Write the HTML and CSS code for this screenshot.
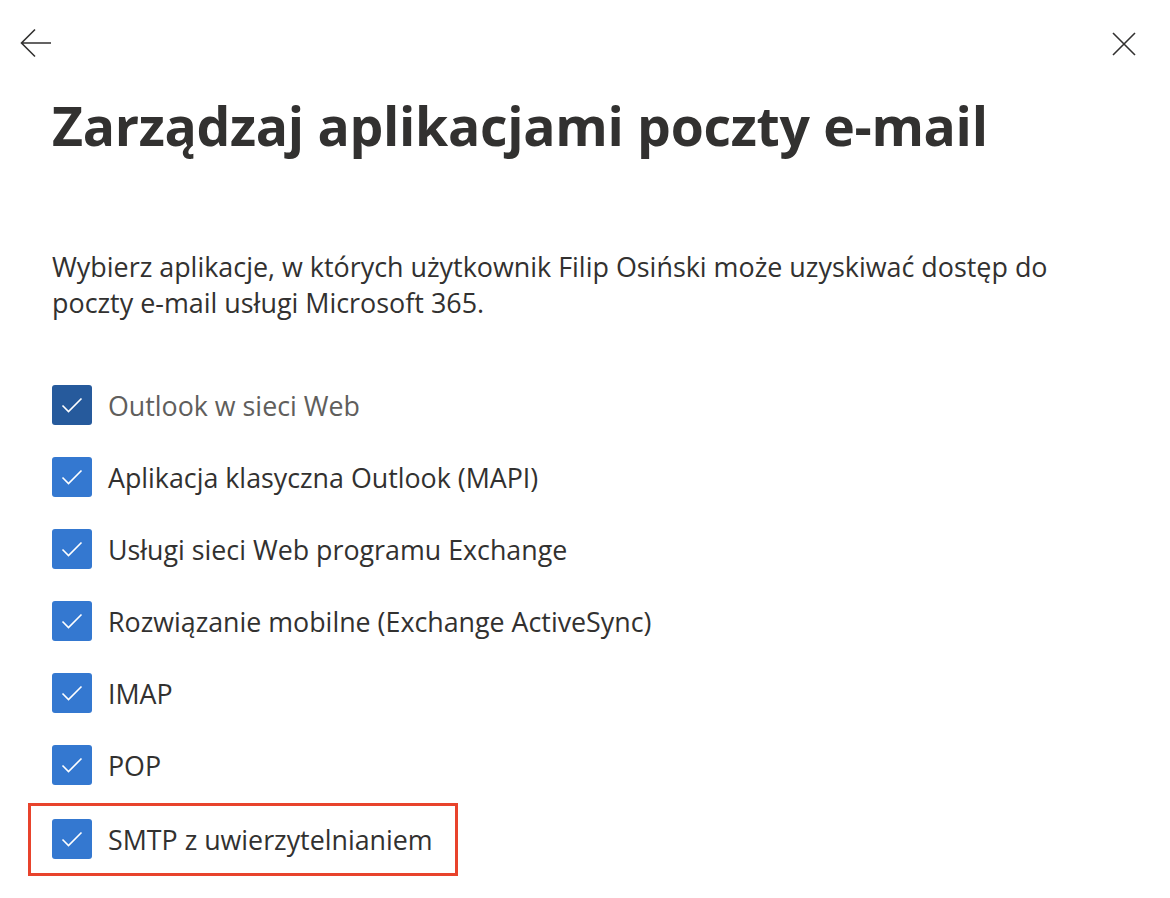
FILE: index.html
```html
<!DOCTYPE html>
<html lang="pl">
<head>
  <meta charset="UTF-8">
  <meta name="viewport" content="width=device-width, initial-scale=1.0">
  <title>Zarządzaj aplikacjami poczty e-mail</title>
  <link rel="stylesheet" href="styles.css">
</head>
<body>

<!-- Top bar -->
<div class="top-bar">
  <button class="icon-button back-button" aria-label="Wstecz">
    <svg width="32" height="30" viewBox="0 0 32 30">
      <path d="M31 15H2M15 1.5L1.5 15L15 28.5" fill="none" stroke="#323130" stroke-width="1.6"/>
    </svg>
  </button>
  <button class="icon-button close-button" aria-label="Zamknij">
    <svg width="24" height="24" viewBox="0 0 24 24">
      <path d="M1 1L23 23M23 1L1 23" fill="none" stroke="#323130" stroke-width="1.6"/>
    </svg>
  </button>
</div>

<!-- Panel -->
<div class="panel">
  <h1 class="panel-title">Zarządzaj aplikacjami poczty e-mail</h1>
  <p class="panel-description">Wybierz aplikacje, w których użytkownik Filip Osiński może uzyskiwać dostęp do poczty e-mail usługi Microsoft 365.</p>

  <div class="app-list">
    <label class="app-item disabled">
      <span class="checkbox"><svg width="22" height="16" viewBox="0 0 22 16"><path d="M1.5 8.5L7.5 14.5L20.5 1.5" fill="none" stroke="#fff" stroke-width="1.6"/></svg></span>
      <span class="app-name">Outlook w sieci Web</span>
    </label>
    <label class="app-item">
      <span class="checkbox"><svg width="22" height="16" viewBox="0 0 22 16"><path d="M1.5 8.5L7.5 14.5L20.5 1.5" fill="none" stroke="#fff" stroke-width="1.6"/></svg></span>
      <span class="app-name">Aplikacja klasyczna Outlook (MAPI)</span>
    </label>
    <label class="app-item">
      <span class="checkbox"><svg width="22" height="16" viewBox="0 0 22 16"><path d="M1.5 8.5L7.5 14.5L20.5 1.5" fill="none" stroke="#fff" stroke-width="1.6"/></svg></span>
      <span class="app-name">Usługi sieci Web programu Exchange</span>
    </label>
    <label class="app-item">
      <span class="checkbox"><svg width="22" height="16" viewBox="0 0 22 16"><path d="M1.5 8.5L7.5 14.5L20.5 1.5" fill="none" stroke="#fff" stroke-width="1.6"/></svg></span>
      <span class="app-name">Rozwiązanie mobilne (Exchange ActiveSync)</span>
    </label>
    <label class="app-item">
      <span class="checkbox"><svg width="22" height="16" viewBox="0 0 22 16"><path d="M1.5 8.5L7.5 14.5L20.5 1.5" fill="none" stroke="#fff" stroke-width="1.6"/></svg></span>
      <span class="app-name">IMAP</span>
    </label>
    <label class="app-item">
      <span class="checkbox"><svg width="22" height="16" viewBox="0 0 22 16"><path d="M1.5 8.5L7.5 14.5L20.5 1.5" fill="none" stroke="#fff" stroke-width="1.6"/></svg></span>
      <span class="app-name">POP</span>
    </label>
    <label class="app-item highlighted">
      <span class="checkbox"><svg width="22" height="16" viewBox="0 0 22 16"><path d="M1.5 8.5L7.5 14.5L20.5 1.5" fill="none" stroke="#fff" stroke-width="1.6"/></svg></span>
      <span class="app-name">SMTP z uwierzytelnianiem</span>
    </label>
  </div>
</div>

</body>
</html>
```

FILE: styles.css
```css
body {
  font-family: "Open Sans", "Noto Sans", Arial, sans-serif;
  margin: 0;
  padding: 0;
  background-color: #fff;
  color: #323130;
}

.top-bar {
  display: flex;
  justify-content: space-between;
  align-items: flex-start;
  padding: 28px 34px 0 20px;
}

.icon-button {
  background: none;
  border: none;
  padding: 0;
  cursor: pointer;
  display: flex;
}

.close-button {
  margin-top: 4px;
}

.panel {
  padding: 0 52px 40px;
}

.panel-title {
  margin: 33px 0 0;
  font-size: 53.5px;
  font-weight: 700;
  line-height: 70px;
  letter-spacing: -0.3px;
  color: #323130;
}

.panel-description {
  margin: 88px 0 0;
  font-size: 26.9px;
  line-height: 36px;
  max-width: 1040px;
}

.app-list {
  display: flex;
  flex-direction: column;
  align-items: flex-start;
  gap: 32px;
  margin-top: 64px;
}

.app-item {
  display: flex;
  align-items: center;
  gap: 16px;
  font-size: 26.8px;
  cursor: pointer;
}

.checkbox {
  width: 40px;
  height: 40px;
  border-radius: 3px;
  background-color: #3478d0;
  display: flex;
  align-items: center;
  justify-content: center;
  flex-shrink: 0;
}

.app-item.disabled .app-name {
  color: #605e5c;
}

.app-item.disabled .checkbox {
  background-color: #265a9c;
}

.highlighted {
  border: 3px solid #e8432c;
  margin: -14px 0 0 -24px;
  padding: 13px 22px 14px 21px;
}
```
